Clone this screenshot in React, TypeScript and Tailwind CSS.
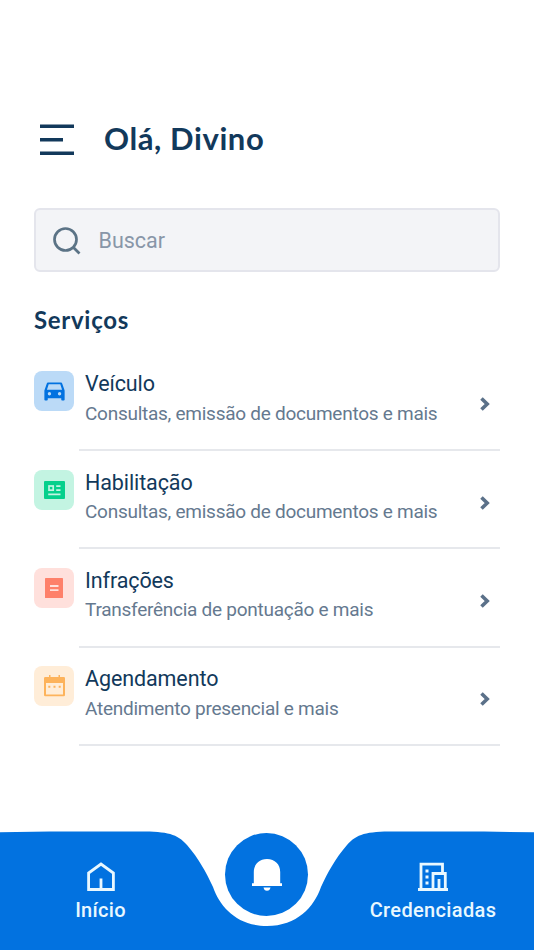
import type { ReactNode } from 'react'

interface Service {
  title: string
  description: string
  tile: string
  icon: ReactNode
}

const CarIcon = () => (
  <svg viewBox="0 0 24 24" className="size-[27px] text-[#0272e0]" fill="currentColor">
    <path d="M18.920 5.010C18.720 4.420 18.160 4 17.500 4h-11c-.66 0-1.210.42-1.420 1.010L3 11v8c0 .55.45 1 1 1h1c.55 0 1-.45 1-1v-1h12v1c0 .55.45 1 1 1h1c.55 0 1-.45 1-1v-8l-2.080-5.990zM6.850 5.500h10.290l1.580 5H5.270l1.580-5zM7.500 15.500a1.500 1.500 0 1 1 0-3 1.500 1.500 0 0 1 0 3zm9 0a1.500 1.500 0 1 1 0-3 1.500 1.500 0 0 1 0 3z" />
  </svg>
)

const LicenseIcon = () => (
  <svg viewBox="0 0 21 18" className="h-[18px] w-[21px]">
    <rect width="21" height="18" rx="1" fill="#05d08c" />
    <g stroke="#c3f4e2" strokeWidth="1.700" fill="none">
      <rect x="5" y="5" width="4.200" height="4.200" />
      <path d="M12.200 5.200h4.300M12.200 9.200h4.300M4.200 13.400h12.300" />
    </g>
  </svg>
)

const FineIcon = () => (
  <svg viewBox="0 0 18 20" className="h-5 w-[18px]">
    <rect width="18" height="20" rx=".6" fill="#fe806a" />
    <path d="M5 8h8.500M5 12.200h8.500" stroke="#ffe0dc" strokeWidth="1.800" />
  </svg>
)

const CalendarIcon = () => (
  <svg viewBox="0 0 21 22" className="h-[22px] w-[21px]" fill="#fdb35b">
    <path d="M5 0h1.500v2h8V0H16v2h3.500A1.300 1.300 0 0 1 21 3.300V20a1.300 1.300 0 0 1-1.300 1.300H1.300A1.300 1.300 0 0 1 0 20V3.300A1.300 1.300 0 0 1 1.300 2H5z" />
    <path d="M2 8h17v11.500H2z" fill="#ffedd8" />
    <path d="M4.300 10.700h2v2h-2zM9.500 10.700h2v2h-2zM14.700 10.700h2v2h-2z" />
  </svg>
)

const services: Service[] = [
  { title: 'Veículo', description: 'Consultas, emissão de documentos e mais', tile: 'bg-[#bbdaf7]', icon: <CarIcon /> },
  { title: 'Habilitação', description: 'Consultas, emissão de documentos e mais', tile: 'bg-[#c3f4e2]', icon: <LicenseIcon /> },
  { title: 'Infrações', description: 'Transferência de pontuação e mais', tile: 'bg-[#ffe0dc]', icon: <FineIcon /> },
  { title: 'Agendamento', description: 'Atendimento presencial e mais', tile: 'bg-[#ffedd8]', icon: <CalendarIcon /> },
]

function ServiceRow({ title, description, tile, icon }: Service) {
  return (
    <li className="flex h-[98.33px] items-start">
      <div className={`mt-[18.5px] flex size-10 shrink-0 items-center justify-center rounded-lg ${tile}`}>{icon}</div>
      <div className="ml-[5px] flex h-full flex-1 items-start justify-between border-b-2 border-[#e6e8ec] pl-1.5 pr-[10px]">
        <div className="pt-[17.7px] whitespace-nowrap">
          <h3 className="text-[21.5px] leading-7 tracking-[-0.1px] text-[#12395b]">{title}</h3>
          <p className="mt-[1.3px] text-[19px] leading-7 tracking-[-0.26px] text-[#65798f]">{description}</p>
        </div>
        <svg viewBox="0 0 10 14" className="mt-[44.5px] h-3.5 w-2.5" fill="none" stroke="#5b7189" strokeWidth="3.600">
          <path d="M1.500 1.500 7.200 7l-5.700 5.500" />
        </svg>
      </div>
    </li>
  )
}

function BottomNav() {
  return (
    <nav className="relative mt-auto h-[119px] text-[#e9f8ff]">
      <svg viewBox="0 0 534 119" className="absolute inset-0 h-full w-full">
        <path
          d="M0 1.200 50 .6h90C168 .6 177 3 187 14c12 14 19 27 26 42C220 76 237 95 267 95s47-19 54-39c7-15 14-28 26-42C357 3 366 .6 394 .6h90l50 .6V119H0z"
          fill="#0272e0"
        />
      </svg>
      <div className="relative grid h-full grid-cols-[201px_1fr_202px]">
        <a className="flex flex-col items-center pt-[30px]">
          <svg viewBox="0 0 30 31" className="h-[31px] w-[30px]" fill="none" stroke="currentColor" strokeWidth="2.800">
            <path d="M2.600 28.500V12L15 3l12.400 9v16.500zM15 28.500V17.500" />
          </svg>
          <span className="mt-1 text-[20px] leading-7 font-medium tracking-[0.3px]">Início</span>
        </a>
        <div className="flex justify-center pt-[2px]">
          <button className="flex size-[83px] items-center justify-center rounded-full bg-[#0272e0]">
            <svg viewBox="0 0 32 34" className="h-[34px] w-8" fill="#fff">
              <path d="M16 1C8 1 2.800 6.500 2.800 14v11.300H1V28h30v-2.700h-1.800V14C29.200 6.500 24 1 16 1zM12.500 29.500h7c-.4 2-1.500 3.300-3.500 3.300s-3.100-1.300-3.500-3.300z" />
            </svg>
          </button>
        </div>
        <a className="flex flex-col items-center pt-[30px]">
          <svg viewBox="0 0 30 31" className="h-[31px] w-[30px]" fill="none" stroke="currentColor" strokeWidth="2.800">
            <path d="M0 28.500h30M3 28.500V3.200h21.500v9M15 28.500V12.500h12.300v16M21 28.500V18" />
            <path d="M7.500 10h3M7.500 16h3M7.500 22h3" />
          </svg>
          <span className="mt-1 text-[20px] leading-7 font-medium tracking-[0.35px]">Credenciadas</span>
        </a>
      </div>
    </nav>
  )
}

export default function App() {
  return (
    <div className="flex h-[950px] w-[534px] flex-col overflow-hidden bg-white font-['Roboto',sans-serif]">
      <header className="mt-[114px] flex h-[50px] items-center pl-10">
        <svg viewBox="0 0 34 31" className="h-[31px] w-[34px]" stroke="#12395b" strokeWidth="3.400">
          <path d="M0 2.300h34M0 15.800h23M0 29.200h34" />
        </svg>
        <h1 className="-mt-0.5 ml-[30px] font-['Lato',sans-serif] text-[31px] font-bold tracking-[0.6px] text-[#12395b]">
          Olá, Divino
        </h1>
      </header>
      <main className="px-[34px] pt-11">
        <div className="flex h-16 items-center rounded-md border-2 border-[#e4e5ec] bg-[#f3f4f7] pl-[17px]">
          <svg viewBox="0 0 28 28" className="mt-px size-7" fill="none" stroke="#5b7386" strokeWidth="2.700">
            <circle cx="12.500" cy="12.500" r="11" />
            <path d="m20.200 20.200 6.300 6.300" />
          </svg>
          <span className="mt-0.5 ml-[17.5px] text-[21.5px] text-[#8896a8]">Buscar</span>
        </div>
        <h2 className="mt-[30px] font-['Lato',sans-serif] text-[24px] leading-9 font-bold tracking-[0.7px] text-[#12395b]">
          Serviços
        </h2>
        <ul className="mt-[14.7px]">
          {services.map((service) => (
            <ServiceRow key={service.title} {...service} />
          ))}
        </ul>
      </main>
      <BottomNav />
    </div>
  )
}
